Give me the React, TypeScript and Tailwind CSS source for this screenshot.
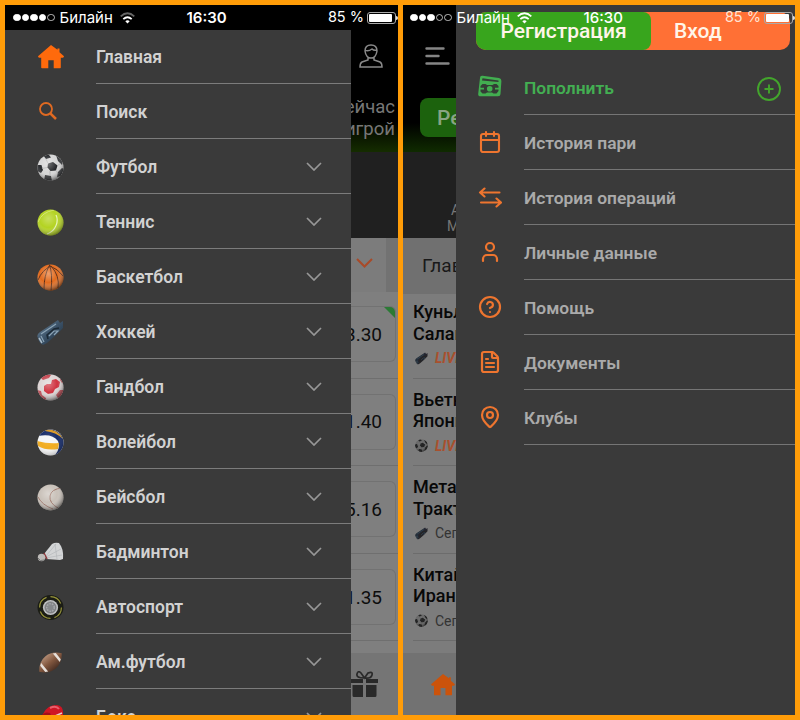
import React from "react";
import { Calendar, User, CircleHelp, FileText, MapPin } from "lucide-react";

function Ball({ kind, size = 27 }: { kind: string; size?: number }) {
  const id = kind + size;
  return (
    <svg width={size} height={size} viewBox="0 0 27 27">
      <defs>
        <radialGradient id={"s" + id} cx="0.42" cy="0.36" r="0.66">
          <stop offset="0" stopColor="#fff" stopOpacity="0.35" />
          <stop offset="0.5" stopColor="#fff" stopOpacity="0" />
          <stop offset="1" stopColor="#000" stopOpacity="0.6" />
        </radialGradient>
        <clipPath id={"c" + id}>
          <circle cx="13.5" cy="13.5" r="13" />
        </clipPath>
        <linearGradient id={"m" + id} x1="0" y1="0" x2="1" y2="1">
          <stop offset="0" stopColor="#718ba1" />
          <stop offset="0.5" stopColor="#3b5268" />
          <stop offset="1" stopColor="#1c2935" />
        </linearGradient>
      </defs>
      {kind === "football" && (
        <g clipPath={`url(#c${id})`}>
          <rect width="27" height="27" fill="#d6d6d6" />
          <path d="M11 9.500l5-1.500 4.500 3.500-1.500 5-5.500 .5-3-3.500z" fill="#25272a" />
          <path d="M6 1l6 0 2 2.500-5 1.500zM19 1l7 6-1 4-4-4zM0 11l4.500 0 1.500 5-2 3-4-2zM8 21l6 1 1 5-8 0zM21 18l4-4 2 1-3 7-4 1z" fill="#292b2e" />
          <path d="M11 9.500L9 5M20.500 11.500l3-2M19 16.500l2 3M13 17v5M10 13.500l-5 1" stroke="#aaa" strokeWidth=".7" fill="none" />
          <rect width="27" height="27" fill={`url(#s${id})`} />
        </g>
      )}
      {kind === "tennis" && (
        <g clipPath={`url(#c${id})`}>
          <rect width="27" height="27" fill="#b4d322" />
          <path d="M1 13Q5 3 17 1" stroke="#cfe36b" strokeWidth="1" fill="none" />
          <path d="M19 6c3 6 0 16-9 19" stroke="#e6f4b5" strokeWidth="1.300" fill="none" />
          <rect width="27" height="27" fill={`url(#s${id})`} opacity=".8" />
        </g>
      )}
      {kind === "basketball" && (
        <g clipPath={`url(#c${id})`}>
          <rect width="27" height="27" fill="#e26b1e" />
          <path d="M12 0Q16 9 14 27M1 16Q5 6 14 2M14 2Q23 12 21 24M12 2Q7 12 7 25M13 2Q21 5 26 12" stroke="#5b2b14" strokeWidth="1" fill="none" />
          <rect width="27" height="27" fill={`url(#s${id})`} />
        </g>
      )}
      {kind === "hockey" && (
        <g>
          <path d="M1 19Q-1 16 3 13L21 1l2 3 3-2 0 7-7 7-9 8-4 2q-4-2-5-7z" fill={`url(#m${id})`} />
          <path d="M4 15L19 5M7 23l-3-6M12 17l5-5 4 0-4 4" stroke="#8ca4b6" strokeWidth="1.200" fill="none" />
          <path d="M11 20l-1-4 7-6 5-1" stroke="#1b2935" strokeWidth="1.500" fill="none" />
          <path d="M2 19l3 5" stroke="#a9bac7" strokeWidth="1.500" />
        </g>
      )}
      {kind === "handball" && (
        <g clipPath={`url(#c${id})`}>
          <rect width="27" height="27" fill="#ddd4d4" />
          <path d="M7 12l3-2 4 0 1-4 4-1 4 3-1 5-4 2-2 4-5 1-4-3z" fill="#cf3340" />
          <path d="M3 3l6-3 5 1-2 3-6 2zM23 16l4 0-2 7-4 1-2-3zM0 16l4 1 1 4 4 3 0 3-9-3zM24 3l3 6-2 0-2-3z" fill="#c44650" />
          <rect width="27" height="27" fill={`url(#s${id})`} />
        </g>
      )}
      {kind === "volleyball" && (
        <g clipPath={`url(#c${id})`}>
          <rect width="27" height="27" fill="#f4f5f6" />
          <path d="M1 7Q6-1 14 0 26 3 27 13L27 27 17 27Q24 20 21 12 15 4 1 7z" fill="#172c69" />
          <path d="M9 0Q21 0 26 10Q19 3 8 2z" fill="#d99a28" />
          <path d="M0 12Q11 15 22 14L21 20Q9 22 1 17z" fill="#f1ac20" />
          <rect width="27" height="27" fill={`url(#s${id})`} opacity=".45" />
        </g>
      )}
      {kind === "baseball" && (
        <g clipPath={`url(#c${id})`}>
          <rect width="27" height="27" fill="#c9c1b9" />
          <path d="M25 4Q14 5 13 12T21 24M1 13Q5 21 16 25" stroke="#9c7468" strokeWidth="1" fill="none" />
          <rect width="27" height="27" fill={`url(#s${id})`} />
        </g>
      )}
      {kind === "badminton" && (
        <g>
          <path d="M7 15L15 5q3-2 7-1 5 6 4 16l-3 1-14-1z" fill="#d3d5d6" />
          <path d="M9 17L19 5M9 18l15-8M9 19l16-3M18 5l2 15" stroke="#b0b4b7" strokeWidth=".6" />
          <path d="M7 14l3 6" stroke="#8e3539" strokeWidth="1.500" />
          <circle cx="4.500" cy="18.500" r="3.700" fill="#bdbbb8" />
          <path d="M1 19q2 4 6 2" stroke="#777" fill="none" />
        </g>
      )}
      {kind === "motorsport" && (
        <g>
          <ellipse cx="13.500" cy="13.500" rx="13" ry="12.500" fill="#1b1d15" />
          <circle cx="13.500" cy="13.500" r="10.900" fill="none" stroke="#96933b" strokeWidth="1.200" strokeDasharray="13 4" />
          <circle cx="13.500" cy="13.500" r="7.600" fill="#bfc1c3" />
          <circle cx="13.500" cy="13.500" r="5.600" fill="#85888b" stroke="#666" strokeWidth=".6" />
          <circle cx="13.500" cy="13.500" r="3.800" stroke="#a5a8ab" strokeWidth="1.500" strokeDasharray="1.500 1.200" fill="none" />
        </g>
      )}
      {kind === "american" && (
        <g transform="rotate(-39 13.500 13.500)">
          <path d="M-1 13.500Q5 5.500 13.500 5.500T28 13.500Q22 21.500 13.500 21.500T-1 13.500z" fill={`url(#am${id})`} />
          <defs>
            <linearGradient id={"am" + id} x1="0" y1="0" x2="0" y2="1">
              <stop offset="0" stopColor="#b08a72" />
              <stop offset="0.5" stopColor="#80563e" />
              <stop offset="1" stopColor="#4b3125" />
            </linearGradient>
          </defs>
          <path d="M3.500 9.500l2.500-1.500v11l-2.500-1.500zM21 8l2.500 1.500v8l-2.500 1.500z" fill="#e6e0db" />
        </g>
      )}
      {kind === "boxing" && (
        <g>
          <path d="M6 10Q10 1 20 1q6 1 6 7v12l-12 6Q3 20 6 10z" fill="#cf1524" />
          <path d="M4 12q3-5 9-3 2 3-1 7l-8 2z" fill="#a10e1a" />
          <path d="M13 4q6-3 9 1" stroke="#e8606c" strokeWidth="2" fill="none" />
          <path d="M18 12l7-3" stroke="#e6cfd0" strokeWidth="1.500" />
        </g>
      )}
    </svg>
  );
}

function House({ className }: { className: string }) {
  return (
    <svg className={className} viewBox="0 0 26 24" fill="currentColor">
      <path d="M13 0L0 11.300q0 1.400 1.300 1.400H3.200V22.500q0 .8.800.8h6.300v-8h5.400v8h6.300q.8 0 .8-.8v-9.800h1.900q1.300 0 1.300-1.400l-4.500-4V3.500h-2v1.200z" />
    </svg>
  );
}

function SearchIcon() {
  return (
    <svg className="mr-1.5 mt-[-2px] h-5 w-5 text-[#e06a22]" viewBox="0 0 20 20" fill="none" stroke="currentColor">
      <circle cx="8" cy="8" r="6" strokeWidth="1.800" />
      <path d="M12.300 12.300L18 18" strokeWidth="2.500" />
    </svg>
  );
}

function StatusBar({ filled, className }: { filled: number; className: string }) {
  return (
    <div className={`flex h-[25px] items-center text-[15px] leading-none text-white ${className}`}>
      <div className="flex gap-px">
        {[0, 1, 2, 3, 4].map((i) => (
          <span key={i} className={`h-[7.500px] w-[7.500px] rounded-full border border-white ${i < filled ? "bg-white" : "opacity-70"}`} />
        ))}
      </div>
      <span className="ml-[5px] w-[54px] whitespace-nowrap font-['Inter',sans-serif]">Билайн</span>
      <svg className="ml-[6px] h-3 w-[15px]" viewBox="0 0 15 12" fill="none" stroke="currentColor" strokeWidth="1.800">
        <path d="M.7 4.300Q7.500-1.800 14.300 4.300" opacity={filled === 4 ? 0.4 : 1} />
        <path d="M3.300 7.100q4.200-3.800 8.400 0" />
        <path d="M7.500 11.500L5.300 9.200q2.200-1.800 4.400 0z" fill="currentColor" stroke="none" />
      </svg>
      <span className={`ml-[52px] w-[43px] whitespace-nowrap font-['Inter',sans-serif] ${filled === 4 ? "font-semibold" : "font-medium"}`}>16:30</span>
      <span className={`ml-auto whitespace-nowrap font-['Inter',sans-serif] text-[14.500px] ${filled === 4 ? "" : "text-[#ffe3d3]"}`}>85 %</span>
      <span className="ml-[3px] flex h-3 w-[29px] rounded-[3px] border border-[#aaa] p-px">
        <span className="w-[23px] rounded-[1px] bg-white" />
      </span>
      <span className="h-1 w-[2px] rounded-r bg-[#ddd]" />
    </div>
  );
}

const sports: [string, string][] = [
  ["Главная", "home"],
  ["Поиск", "search"],
  ["Футбол", "football"],
  ["Теннис", "tennis"],
  ["Баскетбол", "basketball"],
  ["Хоккей", "hockey"],
  ["Гандбол", "handball"],
  ["Волейбол", "volleyball"],
  ["Бейсбол", "baseball"],
  ["Бадминтон", "badminton"],
  ["Автоспорт", "motorsport"],
  ["Ам.футбол", "american"],
  ["Бокс", "boxing"],
];

function SportsDrawer() {
  return (
    <div className="w-[346px] shrink-0 overflow-hidden bg-[#3a3a3a]">
      <div className="-mt-px">
        {sports.map(([name, kind]) => (
          <div key={kind} className="flex h-[55px]">
            <div className="flex w-[91px] shrink-0 items-center justify-center pt-px">
              {kind === "home" ? (
                <House className="h-6 w-[26px] text-[#ff6a0c]" />
              ) : kind === "search" ? (
                <SearchIcon />
              ) : (
                <Ball kind={kind} />
              )}
            </div>
            <div className="flex flex-1 items-center justify-between border-b border-[#7c7c7c] pr-[29px] pt-[3px] text-[17.500px] font-semibold text-[#d2d2d2]">
              <span>{name}</span>
              {kind !== "home" && kind !== "search" && (
                <svg className="mt-[-3px] h-[9px] w-4" viewBox="0 0 16 9" fill="none" stroke="#979797" strokeWidth="1.700">
                  <path d="M1 1l7 7 7-7" />
                </svg>
              )}
            </div>
          </div>
        ))}
      </div>
    </div>
  );
}

function OddsStrip() {
  return (
    <div className="flex min-w-0 flex-1 flex-col overflow-hidden bg-black">
      <div className="flex h-[122px] shrink-0 flex-col items-end bg-[linear-gradient(#000_75%,#152d00)] pr-[3px]">
        <svg className="mr-[12px] mt-[14px] h-[24px] w-[24px] shrink-0" viewBox="0 0 24 24" fill="none" stroke="#898989" strokeWidth="1.500">
          <path d="M6 7q0-6 6-6t6 6q-1 7-6 7T6 7zM6 6q3 2 7-1 2 2 5 1M9 13v3l-6 2q-2 1-2 5h22q0-4-2-5l-6-2v-3" />
        </svg>
        <div className="mt-[28px] whitespace-nowrap text-right text-[18.500px] leading-[22px] text-[#777]">
          Сейчас
          <br />с игрой
        </div>
      </div>
      <div className="h-[86px] shrink-0 bg-[#202020]" />
      <div className="flex h-[54px] shrink-0 bg-[#727272]">
        <div className="flex w-[35px] items-center bg-[#7c7c7c] pb-1 pl-[5px]">
          <svg className="h-[10px] w-[17px]" viewBox="0 0 17 10" fill="none" stroke="#a94a28" strokeWidth="2">
            <path d="M1 1l7.500 7.500L16 1" />
          </svg>
        </div>
      </div>
      <div className="h-[361px] shrink-0 bg-[#7f7f7f] pt-[14px]">
        {["3.30", "1.40", "5.16", "1.35"].map((odd, i) => (
          <div key={odd} className="mb-[15px] h-[72.600px] border-b border-[#6f6f6f]">
            <div className="relative mr-[2px] flex h-[56px] items-center justify-end overflow-hidden rounded-r-md border border-l-0 border-[#727272] pr-[13px] pt-[2px] text-[19px] text-[#0d0d0d]">
              <span>{odd}</span>
              {i === 0 && (
                <svg className="absolute right-0 top-0 h-[11px] w-[11px]" viewBox="0 0 11 11">
                  <path d="M0 0h11v11z" fill="#2b7a35" />
                </svg>
              )}
            </div>
          </div>
        ))}
      </div>
      <div className="flex-1 bg-[#757575] pt-[18px]">
        <svg className="h-[26px] w-[27px]" viewBox="0 0 27 26" fill="#292929">
          <path d="M0 8h12v4H0zM15 8h12v4H15zM1.500 14h10.500v12H3q-1.500 0-1.500-1.500zM15 14h10.500v10.500q0 1.500-1.500 1.500h-9z" />
          <path d="M13 7Q5 7 6 3T10 2L13.500 7 17 2Q22 0 21 4T13 7z" fill="none" stroke="#292929" strokeWidth="1.700" />
        </svg>
      </div>
    </div>
  );
}

const matches = [
  ["Куньлунь", "Салават", "hockey", "LIVE"],
  ["Вьетнам", "Япония", "football", "LIVE"],
  ["Металлург", "Трактор", "hockey", "Сегодня"],
  ["Китай", "Иран", "football", "Сегодня"],
];

function MatchesStrip() {
  return (
    <div className="flex w-[53px] shrink-0 flex-col overflow-hidden bg-black">
      <div className="flex h-[147px] shrink-0 flex-col bg-[linear-gradient(#000_80%,#0f2b00)]">
        <svg className="ml-[22px] mt-[42px] h-[19px] w-[25px] shrink-0" viewBox="0 0 25 19" stroke="#858585" strokeWidth="2.400" strokeLinecap="round">
          <path d="M1.500 1.500h17M1.500 9h12M1.500 16.500h22" />
        </svg>
        <div className="ml-[17px] mt-[32px] flex h-[39px] w-[70px] items-center rounded-lg bg-[#1c620d] pl-[17px] pt-[2px] text-[21px] font-medium text-[#89a483]">Регистрация</div>
      </div>
      <div className="flex h-[86px] shrink-0 flex-col justify-end whitespace-nowrap bg-[#202020] pb-[4px] pl-[44px] text-[14px] leading-4 text-[#777]">
        <span className="ml-1">Англия</span>
        <span>Матч</span>
      </div>
      <div className="flex h-[56px] shrink-0 items-center bg-[#707070] pl-[19px] pt-px text-[19px] text-[#191919]">Главные</div>
      <div className="h-[359px] shrink-0 bg-[#7c7c7c] pt-[7px]">
        {matches.map(([a, b, sport, when], i) => (
          <div key={a} className={`ml-[10px] flex flex-col whitespace-nowrap border-b border-[#6c6c6c] ${i === 0 ? "h-[77.600px]" : "h-[87.600px] pt-[10px]"}`}>
            <div className="text-[18px] font-medium leading-[21.500px] text-[#080808]">
              {a}
              <br />
              {b}
            </div>
            <div className={`mt-[6px] flex items-center gap-[7px] pl-[2px] text-[14px] leading-4 ${when === "LIVE" ? "font-bold italic text-[#a9502d]" : "text-[#333]"}`}>
              <span className="opacity-70 brightness-50 contrast-150">
                <Ball kind={sport} size={13} />
              </span>
              {when}
            </div>
          </div>
        ))}
      </div>
      <div className="flex-1 bg-[#727272] pl-[28px] pt-[21px]">
        <House className="h-[22px] w-6 text-[#cb530b]" />
      </div>
    </div>
  );
}

function CashIcon() {
  return (
    <svg className="h-6 w-6" viewBox="0 0 24 24">
      <path d="M2 3Q2 .5 4.500.8L21 3q2.500.4 2.400 3L22.500 19q0 2.300-2.500 2.300H2.500Q0 21.300.2 19z" fill="#42ae50" />
      <path d="M4.500 3.200L20.500 5.600V7L4 5.500zM4.500 9h3l1.500 1h5.500l1.500-1h2.500l2 2v5l-2 2.500h-3l-1.500-1h-5l-1.500 1H4.500L2.500 16.500V11z" fill="#343d35" />
      <circle cx="11.700" cy="13.700" r="2.800" fill="#42ae50" />
      <path d="M2 13.700h4M17 13.700h4" stroke="#42ae50" strokeWidth="1.800" />
    </svg>
  );
}

function TransferIcon() {
  return (
    <svg className="h-6 w-6" viewBox="0 0 24 24" fill="none" stroke="currentColor" strokeWidth="2.100" strokeLinecap="round" strokeLinejoin="round">
      <path d="M21.500 7.500H2M6.500 3.500L2 7.500l4.500 4M3 17.500h20M18.500 13.500l4.500 4-4.500 4" />
    </svg>
  );
}

const account = [
  ["Пополнить", <CashIcon />],
  ["История пари", <Calendar strokeWidth={2.1} />],
  ["История операций", <TransferIcon />],
  ["Личные данные", <User strokeWidth={2.2} />],
  ["Помощь", <CircleHelp strokeWidth={2.2} />],
  ["Документы", <FileText strokeWidth={2.2} />],
  ["Клубы", <MapPin strokeWidth={2.2} />],
] as const;

function AccountDrawer() {
  return (
    <div className="flex min-w-0 flex-1 flex-col bg-[#3a3a3a]">
      <div className="ml-5 mt-[7px] flex h-[38px] w-[314px] shrink-0 overflow-hidden rounded-[10px] bg-[#ff7035] text-[21px] font-medium leading-[39px] text-[#fff5e9]">
        <div className="w-[175px] rounded-r-[8px] bg-[#38a51d] text-center">Регистрация</div>
        <div className="pl-[23px]">Вход</div>
      </div>
      <div className="mt-[10px]">
        {account.map(([name, icon], i) => (
          <div key={name} className="flex h-[55px]">
            <div className="flex w-[68px] shrink-0 items-center justify-center pb-[2px] text-[#ee752f]">{icon}</div>
            <div className={`flex flex-1 items-center justify-between border-b border-[#757575] pr-[14px] pt-[3px] text-[17.400px] font-semibold ${i === 0 ? "text-[#43ae52]" : "text-[#aaa]"}`}>
              <span>{name}</span>
              {i === 0 && (
                <svg className="h-6 w-6" viewBox="0 0 24 24" fill="none" stroke="#43a52c" strokeWidth="1.900">
                  <circle cx="12" cy="12" r="11" />
                  <path d="M12 7.500v9M7.500 12h9" />
                </svg>
              )}
            </div>
          </div>
        ))}
      </div>
    </div>
  );
}

export default function App() {
  return (
    <div className="flex h-[720px] w-[800px] gap-[5px] overflow-hidden bg-[#ff9c08] p-[5px] font-['Roboto',sans-serif]">
      <div className="flex w-[393px] flex-col overflow-hidden bg-black">
        <StatusBar filled={4} className="shrink-0 bg-black pl-[8px]" />
        <div className="flex min-h-0 flex-1">
          <SportsDrawer />
          <OddsStrip />
        </div>
      </div>
      <div className="relative flex w-[392px] overflow-hidden">
        <MatchesStrip />
        <AccountDrawer />
        <StatusBar filled={3} className="absolute inset-x-0 top-0 pl-[7px]" />
      </div>
    </div>
  );
}
